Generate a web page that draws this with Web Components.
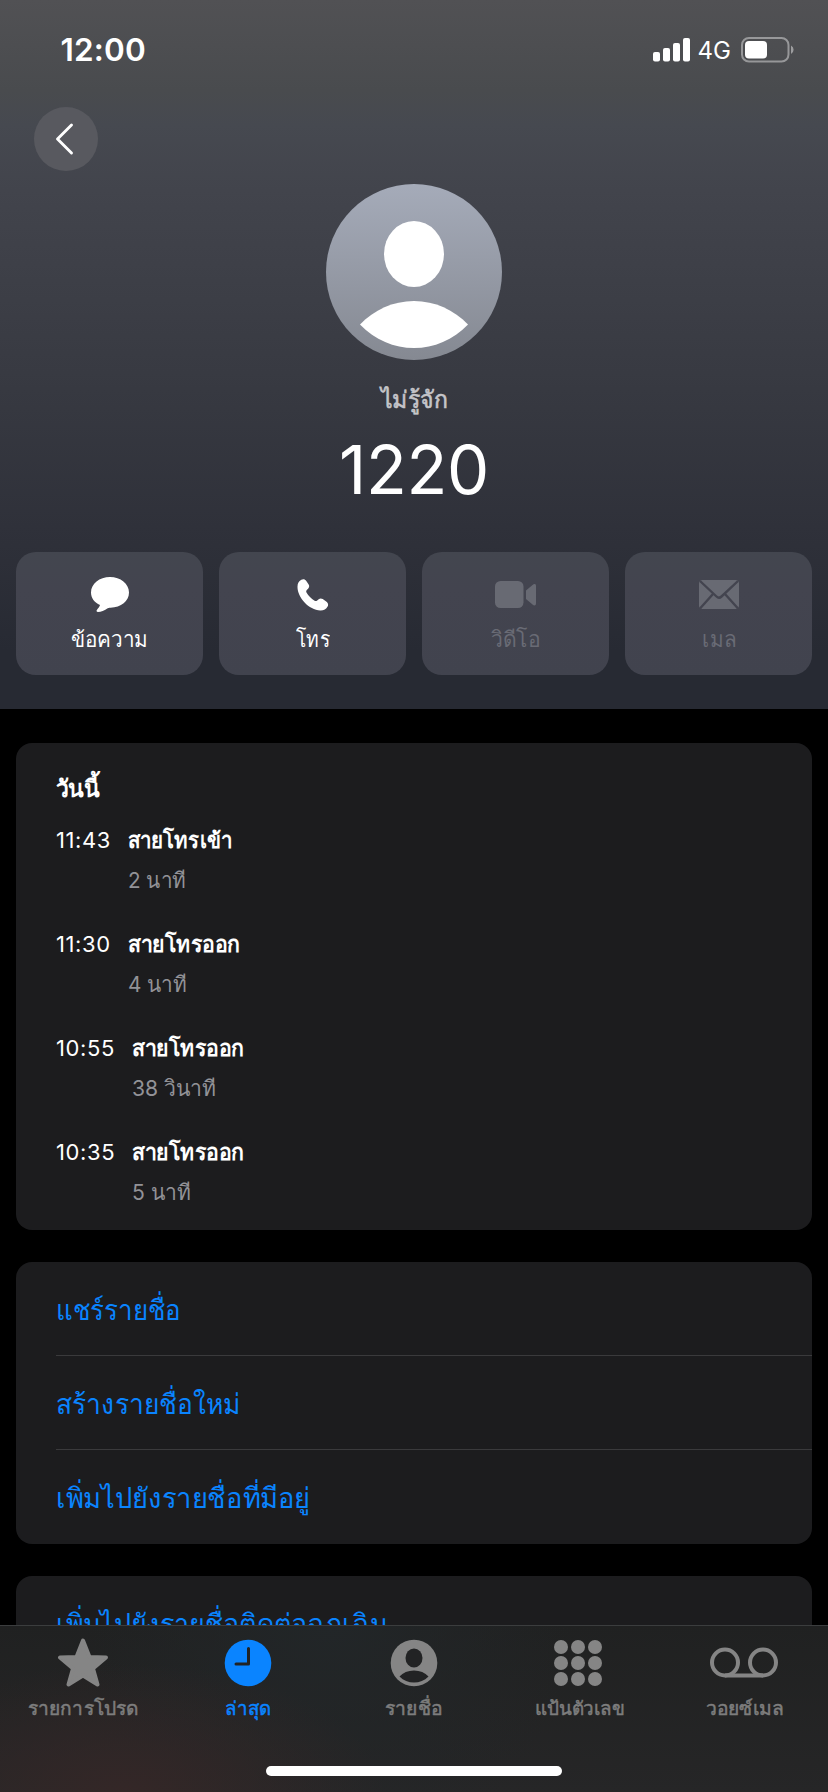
<!DOCTYPE html>
<html lang="th">
<head>
<meta charset="utf-8">
<title>1220</title>
<style>
html,body{margin:0;background:#000;height:1792px;overflow:hidden}
body{font-family:Inter,"Noto Sans",sans-serif;color:#fff;width:828px}
</style>
</head>
<body>
<phone-app></phone-app>
<script>
const define=(name,html)=>customElements.define(name,class extends HTMLElement{
  constructor(){super();this.attachShadow({mode:'open'}).innerHTML=html}
});

/* single line of text: size, line height, tracking come from attributes;
   "fit" condenses or widens the line to the given width */
customElements.define('text-line',class extends HTMLElement{
  constructor(){super();this.attachShadow({mode:'open'}).innerHTML=`<style>
  :host{display:block;white-space:nowrap;font-weight:var(--w,400)}
  span{display:inline-block;font-size:var(--s,22px);line-height:var(--l,40px);letter-spacing:var(--t,0);height:var(--l,40px);vertical-align:top;transform-origin:0 0;-webkit-text-stroke:var(--k,0) currentColor}
  </style><span><slot></slot></span>`}
  connectedCallback(){for(const [a,p,u] of [['size','--s','px'],['line','--l','px'],['track','--t','px'],['weight','--w',''],['stroke','--k','px']])
    if(this.hasAttribute(a))this.style.setProperty(p,this.getAttribute(a)+u);
    const fit=+this.getAttribute('fit');
    if(fit){const s=this.shadowRoot.querySelector('span'),w=s.getBoundingClientRect().width;
      if(w){s.style.transform=`scaleX(${fit/w})`;this.style.width=fit+'px'}}}
});

define('status-bar',`<style>
:host{display:flex;height:100px;padding:0 33px 0 60.5px;align-items:center;justify-content:space-between}
div{display:flex;align-items:center}
svg{display:block}
</style>
<text-line size="31.5" line="40" weight="600" track=".2">12:00</text-line>
<div>
<svg width="38" height="24" viewBox="0 0 38 24" fill="#fff"><rect x="0" y="14" width="7" height="9.5" rx="2"/><rect x="10" y="10" width="7" height="13.500" rx="2"/><rect x="20" y="5" width="7" height="18.500" rx="2"/><rect x="30" y="0" width="7" height="23.500" rx="2"/></svg>
<text-line size="24" line="40" style="margin:2px 10px 0 7px">4G</text-line>
<svg width="54" height="26" viewBox="0 0 54 26"><rect x="1" y="1" width="46.500" height="23.500" rx="7" fill="none" stroke="#fff" stroke-opacity=".42" stroke-width="2"/><rect x="4" y="4" width="22" height="17.500" rx="4" fill="#fff"/><path d="M50 8.500a4.800 4.800 0 0 1 0 8.500z" fill="#fff" fill-opacity=".45"/></svg>
</div>`);

define('back-button',`<style>
:host{display:flex;width:64px;height:64px;border-radius:50%;background:#58595f;align-items:center;justify-content:center}
svg{display:block;margin:0 5px 1px 0}
</style><svg width="20" height="34" viewBox="0 0 20 34"><path d="M17.500 3 3.500 17l14 14" fill="none" stroke="#fff" stroke-width="2.900" stroke-linecap="round" stroke-linejoin="round"/></svg>`);

define('contact-avatar',`<style>:host{display:block;width:176px;height:176px}svg{display:block}</style>
<svg width="176" height="176" viewBox="0 0 176 176"><defs><linearGradient id="g" x2="0" y2="1"><stop stop-color="#a5abb9"/><stop offset="1" stop-color="#858992"/></linearGradient></defs>
<circle cx="88" cy="88" r="88" fill="url(#g)"/><ellipse cx="88" cy="70" rx="30" ry="33" fill="#fff"/>
<path d="M34 140.500C48 126 67 117 88 117s40 9 54 23.500C127 156 108 164 88 164s-39-8-54-23.500z" fill="#fff"/></svg>`);

define('action-button',`<style>
:host{display:flex;flex-direction:column;align-items:center;height:123px;border-radius:20px;background:linear-gradient(#43464f,#43444f 30%,#41434e)}
:host([disabled]){color:#696b75}
.i{height:38px;margin:24px 0 1px;display:flex;align-items:center;justify-content:center}
</style><div class="i"><slot name="icon"></slot></div><slot></slot>`);

define('contact-hero',`<style>
:host{display:flex;flex-direction:column;height:709px;background:linear-gradient(#515154 0,#494b4e 90px,#464950 125px,#42444c 190px,#373941 390px,#2e3039 545px,#272a33 650px,#272a33 709px)}
back-button{margin:7px 0 0 34px}
.c{display:flex;flex-direction:column;align-items:center;margin-top:13px}
.name{color:#c5c5c9}
.acts{display:grid;grid-template-columns:repeat(4,187px);gap:16px;padding:0 16px;margin-top:40px}
svg{display:block}
</style>
<status-bar></status-bar>
<back-button></back-button>
<div class="c"><contact-avatar></contact-avatar>
<text-line class="name" size="24" line="58" stroke=".6" fit="67" style="margin-top:11px">ไม่รู้จัก</text-line>
<text-line size="67" line="85" track="-.3" style="margin-top:-2px">1220</text-line></div>
<div class="acts">
<action-button><svg slot="icon" width="38" height="36" viewBox="0 0 38 36"><path d="M19 0C29.500 0 38 6.800 38 15.500S30 30.300 19.500 30.800c-1.500 0-2.500.2-3.600 1-2.500 1.800-5.700 3.200-8.900 3.200-1.500 0-1.900-1.300-1-2.300 1.300-1.400 2.500-2.800 3-4.600C3.500 25.500 0 21 0 15.500 0 6.800 8.500 0 19 0z" fill="#fff"/></svg><text-line size="22" line="48" fit="77">ข้อความ</text-line></action-button>
<action-button><svg slot="icon" width="32" height="32" viewBox="0 0 32 32"><path d="M4.300.8c2-1 3.800-.5 5 1.200l2.200 3.300c1 1.500.9 2.900-.2 4.100L9.800 11c-.7.8-.8 1.500-.3 2.500 2 3.400 4.600 6 8.100 8.200 1 .6 1.800.5 2.600-.3l1.500-1.200c1.200-1 2.600-1.100 4-.1l3.500 2.500c1.900 1.300 2.400 3 1.400 4.900-1.400 2.700-4 4.100-7.300 4C11.800 31 .2 18.300.5 7.600.6 4.500 1.700 2.100 4.300.8z" fill="#fff"/></svg><text-line size="22" line="48" fit="34">โทร</text-line></action-button>
<action-button disabled><svg slot="icon" width="41" height="28" viewBox="0 0 41 28" fill="#686a73"><rect y="0" width="28.500" height="27" rx="5.500"/><path d="M31 9.500 37.500 4c1.600-1.400 3.500-1.200 3.500 1v17.500c0 2.200-1.900 2.400-3.500 1L31 18z"/></svg><text-line size="22" line="48" fit="49">วิดีโอ</text-line></action-button>
<action-button disabled><svg slot="icon" width="40" height="30" viewBox="0 0 40 30"><rect y="0" width="40" height="29" rx="3.500" fill="#686a73"/><path d="m1 1 16.500 15.500q2.500 2.300 5 0L39 1M1 28.500 14 14M39 28.500 26 14" fill="none" stroke="#43444f" stroke-width="2.400"/></svg><text-line size="22" line="48" fit="34">เมล</text-line></action-button>
</div>`);

define('list-card',`<style>:host{display:block;margin:0 16px 32px;border-radius:16px;background:#1c1c1e;overflow:hidden}</style><slot></slot>`);

customElements.define('call-row',class extends HTMLElement{
  connectedCallback(){const g=a=>this.getAttribute(a);
  this.attachShadow({mode:'open'}).innerHTML=`<style>
  :host{display:flex;padding-left:40px;gap:17px;height:104px}
  .d{color:#929297}
  </style><text-line size="22" line="42" track=".6">${g('time')}</text-line>
  <div><text-line size="22" line="42" weight="600" fit="${g('kind-width')}">${g('kind')}</text-line><text-line class="d" size="22" line="39" fit="${g('duration-width')}">${g('duration')}</text-line></div>`}
});

customElements.define('link-row',class extends HTMLElement{
  connectedCallback(){this.attachShadow({mode:'open'}).innerHTML=`<style>:host{display:block;height:94px;padding-left:40px;color:#0a84ff}
div{height:93px;border-bottom:1px solid #3a3a3c}
:host([last]) div{border-color:transparent}</style><div><text-line size="28" line="96" fit="${this.getAttribute('width')}">${this.getAttribute('label')}</text-line></div>`}
});

define('tab-item',`<style>:host{display:flex;flex-direction:column;align-items:center;color:#7d7d7d;fill:#858585}
:host([active]){color:#0a84ff;fill:#0a84ff}
.i{height:50px;margin:12px 0 1px;display:flex;align-items:center}</style><div class="i"><slot name="icon"></slot></div><slot></slot>`);

define('tab-bar',`<style>
:host{display:block;position:absolute;left:0;top:1625px;width:828px;height:167px;background:radial-gradient(260px 130px at 125px 168px,#342727,#34272700),radial-gradient(circle at 330px 0,#222628,#22262800 240px),linear-gradient(#202121,#262627)}
nav{display:grid;grid-template-columns:repeat(5,1fr);height:140px;border-top:1px solid #3b3d3e}
.home{width:296px;height:10px;border-radius:5px;background:#fff;margin:0 auto}
svg{display:block}
</style><nav>
<tab-item><svg slot="icon" width="52" height="50" viewBox="0 0 52 50"><path d="M26 2.500 32.500 19 49 19.500 36 30.500 40.500 46.500 26 37.500 11.500 46.500 16 30.500 3 19.500 19.500 19z" stroke="#858585" stroke-width="4" stroke-linejoin="round"/></svg><text-line size="19" line="40" stroke=".5" fit="110">รายการโปรด</text-line></tab-item>
<tab-item active><svg slot="icon" width="48" height="48" viewBox="0 0 48 48"><circle cx="24" cy="24" r="23.300"/><path d="M24.500 9.500V25H12" fill="none" stroke="#212324" stroke-width="3" stroke-linecap="round" stroke-linejoin="round"/></svg><text-line size="19" line="40" stroke=".5" fit="46">ล่าสุด</text-line></tab-item>
<tab-item><svg slot="icon" width="48" height="48" viewBox="0 0 48 48"><circle cx="24" cy="24" r="23.300"/><ellipse cx="24" cy="19" rx="8.500" ry="9.500" fill="#222324"/><path d="M9.500 37.500C13 33.500 18 31.500 24 31.500s11 2 14.500 6C34.500 41.500 29.500 43.500 24 43.500s-10.500-2-14.500-6z" fill="#222324"/></svg><text-line size="19" line="40" stroke=".5" fit="57">รายชื่อ</text-line></tab-item>
<tab-item><svg slot="icon" style="margin-right:3px" width="48" height="48" viewBox="0 0 48 48"><circle cx="7" cy="8" r="7"/><circle cx="24" cy="8" r="7"/><circle cx="41" cy="8" r="7"/><circle cx="7" cy="24" r="7"/><circle cx="24" cy="24" r="7"/><circle cx="41" cy="24" r="7"/><circle cx="7" cy="40" r="7"/><circle cx="24" cy="40" r="7"/><circle cx="41" cy="40" r="7"/></svg><text-line size="19" line="40" stroke=".5" fit="90">แป้นตัวเลข</text-line></tab-item>
<tab-item><svg slot="icon" style="margin-right:2px" width="70" height="32" viewBox="0 0 70 32"><path d="M16 28.500H54" stroke="#858585" stroke-width="4"/><g fill="none" stroke="#858585" stroke-width="4"><circle cx="16" cy="15.500" r="13"/><circle cx="54" cy="15.500" r="13"/></g></svg><text-line size="19" line="40" stroke=".5" fit="78">วอยซ์เมล</text-line></tab-item>
</nav><div class="home"></div>`);

define('phone-app',`<style>
:host{display:block;position:relative;width:828px;height:1792px;overflow:hidden;background:#000}
.calls{margin-top:34px;padding-top:24px;height:463px}
.h{padding-left:40px;margin-bottom:8px}
</style><contact-hero></contact-hero>
<list-card class="calls"><text-line class="h" size="24" line="44" weight="600" fit="43">วันนี้</text-line>
<call-row time="11:43" kind="สายโทรเข้า" kind-width="104" duration="2 นาที" duration-width="58"></call-row>
<call-row time="11:30" kind="สายโทรออก" kind-width="112" duration="4 นาที" duration-width="59"></call-row>
<call-row time="10:55" kind="สายโทรออก" kind-width="112" duration="38 วินาที" duration-width="84"></call-row>
<call-row time="10:35" kind="สายโทรออก" kind-width="112" duration="5 นาที" duration-width="59"></call-row></list-card>
<list-card><link-row label="แชร์รายชื่อ" width="125"></link-row><link-row label="สร้างรายชื่อใหม่" width="184"></link-row><link-row last label="เพิ่มไปยังรายชื่อที่มีอยู่" width="254"></link-row></list-card>
<list-card><link-row last label="เพิ่มไปยังรายชื่อติดต่อฉุกเฉิน" width="332"></link-row></list-card>
<tab-bar></tab-bar>`);
</script>
</body>
</html>
